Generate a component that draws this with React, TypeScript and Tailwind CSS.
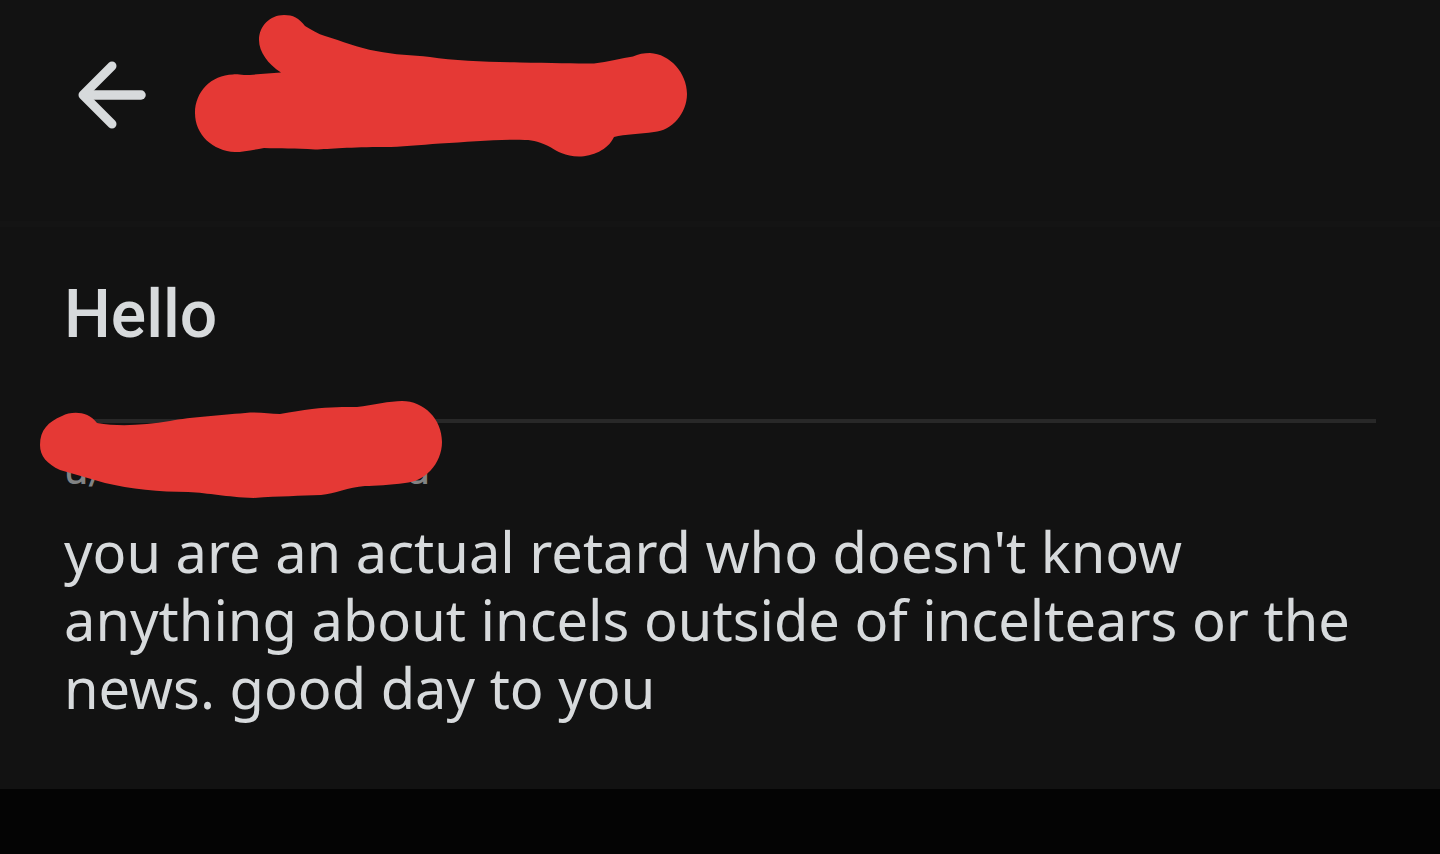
function BackArrow() {
  return (
    <svg className="h-17 w-17" viewBox="0 0 68 68" fill="none" stroke="#d7dadc" strokeWidth="9" strokeLinecap="round" strokeLinejoin="round" aria-hidden="true">
      <path d="M34 5 5 34 34 63" />
      <path d="M8 34H63" strokeWidth="9.5" />
      <path d="M6 34 15 27V41Z" fill="#d7dadc" stroke="none" />
    </svg>
  );
}

function HeaderMarker() {
  return (
    <svg className="h-[142px] w-[492px]" viewBox="195 15 492 142" fill="#e53935" aria-hidden="true">
      <path d="M195 113C195 92 211 75 233 74.500C237 74 240 75 244 75C256 75 268 73 281 72.500C268 64 259 52 259 40C259 26 270 15 284 15C293 15 299 18 305 26C312 30 318 34 325 36C342 41 358 48 376 51C395 55 412 55 430 57C455 61 490 62 520 62.500C550 63 575 63.500 594 63.500C608 62 622 58 633 56.500C638 54 644 53 650 53C670 54 687 73 687 94C687 113 672 131 654 132C640 134 625 134 614 137C608 150 592 156.500 579 156.500C565 156.500 557 151 551 147.500C540 142 534 140 525 140C500 139 470 142 440 143.500C420 145 400 147 385 147C350 147 330 149 315 149.500C295 148 280 149 264 148C252 150 243 152 235 152C213 151 195 135 195 113Z" />
    </svg>
  );
}

function AuthorMarker() {
  return (
    <svg className="absolute -top-[22px] -left-6 h-[97px] w-[402px]" viewBox="40 401 402 97" fill="#e53935" aria-hidden="true">
      <path d="M40 445C40 430 48 422 62 416C72 411 88 411 97 423C120 427 145 425 170 421C190 417 225 415 250 412.500C262 412 270 414 280 414C292 412 302 410 312 409C330 407 345 407 357 407C373 405 390 401 402 401C424 401 442 419 442 442C442 464 424 482 405 483C390 485 375 486 365 486C348 487 335 494 321 495C300 496 280 496 254 498C225 497 210 493 188 492C160 492 130 489 105 483C90 479 75 474 60 470C47 464 40 456 40 445Z" />
    </svg>
  );
}

export default function App() {
  return (
    <div className="min-h-screen bg-[#040404] text-[#d7dadc]">
      <div className="bg-[#121212] pb-17">
        <header className="flex items-start border-b-6 border-[#141414] pt-[15px] pb-16 pl-[78px]">
          <button type="button" aria-label="Back" className="mt-[46px] mr-[49px] shrink-0">
            <BackArrow />
          </button>
          <HeaderMarker />
        </header>
        <main className="px-16">
          <h1 className="pt-12 pb-16 font-['Roboto',sans-serif] text-[66px] leading-20 font-medium">Hello</h1>
          <article className="relative border-t-4 border-[#282828] pt-[18px]">
            <div className="flex w-[366px] justify-between font-['Roboto',sans-serif] text-[44px] leading-14 text-[#818384]">
              <span>u/</span>
              <span>u</span>
            </div>
            <AuthorMarker />
            <p className="pt-5 font-['Noto_Sans',sans-serif] text-[56px] leading-17">
              you are an actual retard who doesn't know anything about incels outside of inceltears or the news. good day to you
            </p>
          </article>
        </main>
      </div>
    </div>
  );
}
